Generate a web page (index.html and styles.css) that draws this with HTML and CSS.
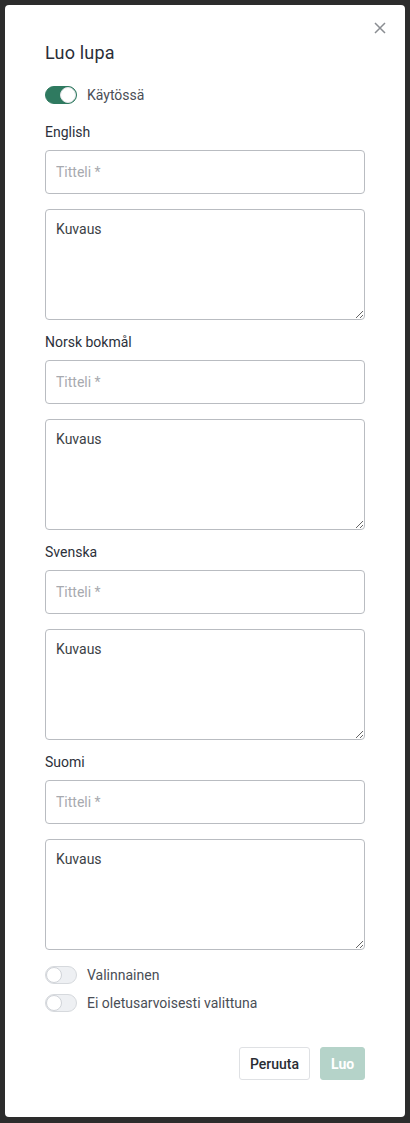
FILE: index.html
```html
<!DOCTYPE html>
<html lang="fi">
<head>
<meta charset="utf-8">
<title>Luo lupa</title>
<link rel="stylesheet" href="styles.css">
</head>
<body>
<div class="backdrop">
  <div class="modal">
    <button class="close" aria-label="Sulje">
      <svg width="12" height="12" viewBox="0 0 12 12"><path d="M1 1L11 11M11 1L1 11" stroke="#8a8d92" stroke-width="1.5" fill="none"/></svg>
    </button>
    <h2 class="title">Luo lupa</h2>
    <label class="toggle-row first">
      <span class="toggle on"><span class="knob"></span></span>
      <span class="toggle-label">Käytössä</span>
    </label>

    <div class="section">
      <div class="lang">English</div>
      <input class="field" placeholder="Titteli *">
      <textarea class="field area">Kuvaus</textarea>
    </div>
    <div class="section">
      <div class="lang">Norsk bokmål</div>
      <input class="field" placeholder="Titteli *">
      <textarea class="field area">Kuvaus</textarea>
    </div>
    <div class="section">
      <div class="lang">Svenska</div>
      <input class="field" placeholder="Titteli *">
      <textarea class="field area">Kuvaus</textarea>
    </div>
    <div class="section">
      <div class="lang">Suomi</div>
      <input class="field" placeholder="Titteli *">
      <textarea class="field area">Kuvaus</textarea>
    </div>

    <div class="options">
      <label class="toggle-row">
        <span class="toggle"><span class="knob"></span></span>
        <span class="toggle-label">Valinnainen</span>
      </label>
      <label class="toggle-row">
        <span class="toggle"><span class="knob"></span></span>
        <span class="toggle-label">Ei oletusarvoisesti valittuna</span>
      </label>
    </div>

    <div class="actions">
      <button class="btn secondary">Peruuta</button>
      <button class="btn primary" disabled>Luo</button>
    </div>
  </div>
</div>
</body>
</html>
```
FILE: styles.css
```css
* { box-sizing: border-box; }
html, body { margin: 0; padding: 0; }
body {
  background: #2c2c2c;
  font-family: Roboto, "Noto Sans", Arial, sans-serif;
  width: 410px;
  height: 1123px;
  overflow: hidden;
}
.backdrop {
  padding: 5px 5px 0 5px;
  height: 1123px;
}
.modal {
  position: relative;
  background: #fff;
  border-radius: 4px;
  width: 400px;
  padding: 36px 40px 37px 40px;
}
.close {
  position: absolute;
  top: 16px;
  right: 18px;
  width: 14px;
  height: 14px;
  padding: 1px;
  border: 0;
  background: none;
  display: flex;
  align-items: center;
  justify-content: center;
}
.title {
  margin: 0;
  font-size: 18px;
  font-weight: 400;
  line-height: 24px;
  color: #2a2e38;
  letter-spacing: 0.2px;
}
.toggle-row {
  display: flex;
  align-items: center;
  gap: 10px;
  height: 18px;
}
.toggle-row.first {
  margin-top: 21px;
  margin-bottom: 18px;
}
.toggle {
  position: relative;
  width: 32px;
  height: 18px;
  border-radius: 9px;
  background: #eef0f3;
  border: 1px solid #d6d9dd;
  flex: none;
}
.toggle .knob {
  position: absolute;
  top: 0;
  left: 0;
  width: 16px;
  height: 16px;
  border-radius: 50%;
  background: #fff;
  border: 1px solid #d0d3d8;
}
.toggle.on {
  background: #2f7a60;
  border-color: #2f7a60;
}
.toggle.on .knob {
  left: 14px;
  border-color: #e3e5e8;
}
.toggle-label {
  font-size: 14px;
  color: #4a4e56;
  line-height: 18px;
}
.section {
  display: flex;
  flex-direction: column;
  padding-bottom: 12px;
}
.lang {
  font-size: 14px;
  line-height: 20px;
  color: #2c303a;
  margin-bottom: 8px;
}
.field {
  display: block;
  width: 320px;
  border: 1px solid #b9bcc1;
  border-radius: 4px;
  font-family: Roboto, "Noto Sans", Arial, sans-serif;
  font-size: 14px;
  color: #3c3f45;
  background: #fff;
  outline: none;
}
input.field {
  height: 44px;
  padding: 0 10px;
}
input.field::placeholder {
  color: #a7aaaf;
}
.area {
  margin-top: 15px;
  height: 111px;
  padding: 9px 10px;
  line-height: 20px;
  resize: vertical;
}
.options {
  display: flex;
  flex-direction: column;
  gap: 10px;
  margin-top: 4px;
}
.actions {
  display: flex;
  justify-content: flex-end;
  gap: 10px;
  margin-top: 35px;
}
.btn {
  height: 33px;
  border-radius: 3px;
  font-family: Roboto, "Noto Sans", Arial, sans-serif;
  font-size: 14px;
  font-weight: 500;
  padding: 0 10px;
}
.btn.secondary {
  width: 71px;
  background: #fff;
  border: 1px solid #dfe1e4;
  color: #2a2d33;
}
.btn.primary {
  width: 45px;
  background: #b5d3c9;
  border: 1px solid #b5d3c9;
  color: #fff;
  font-weight: 700;
}
```
